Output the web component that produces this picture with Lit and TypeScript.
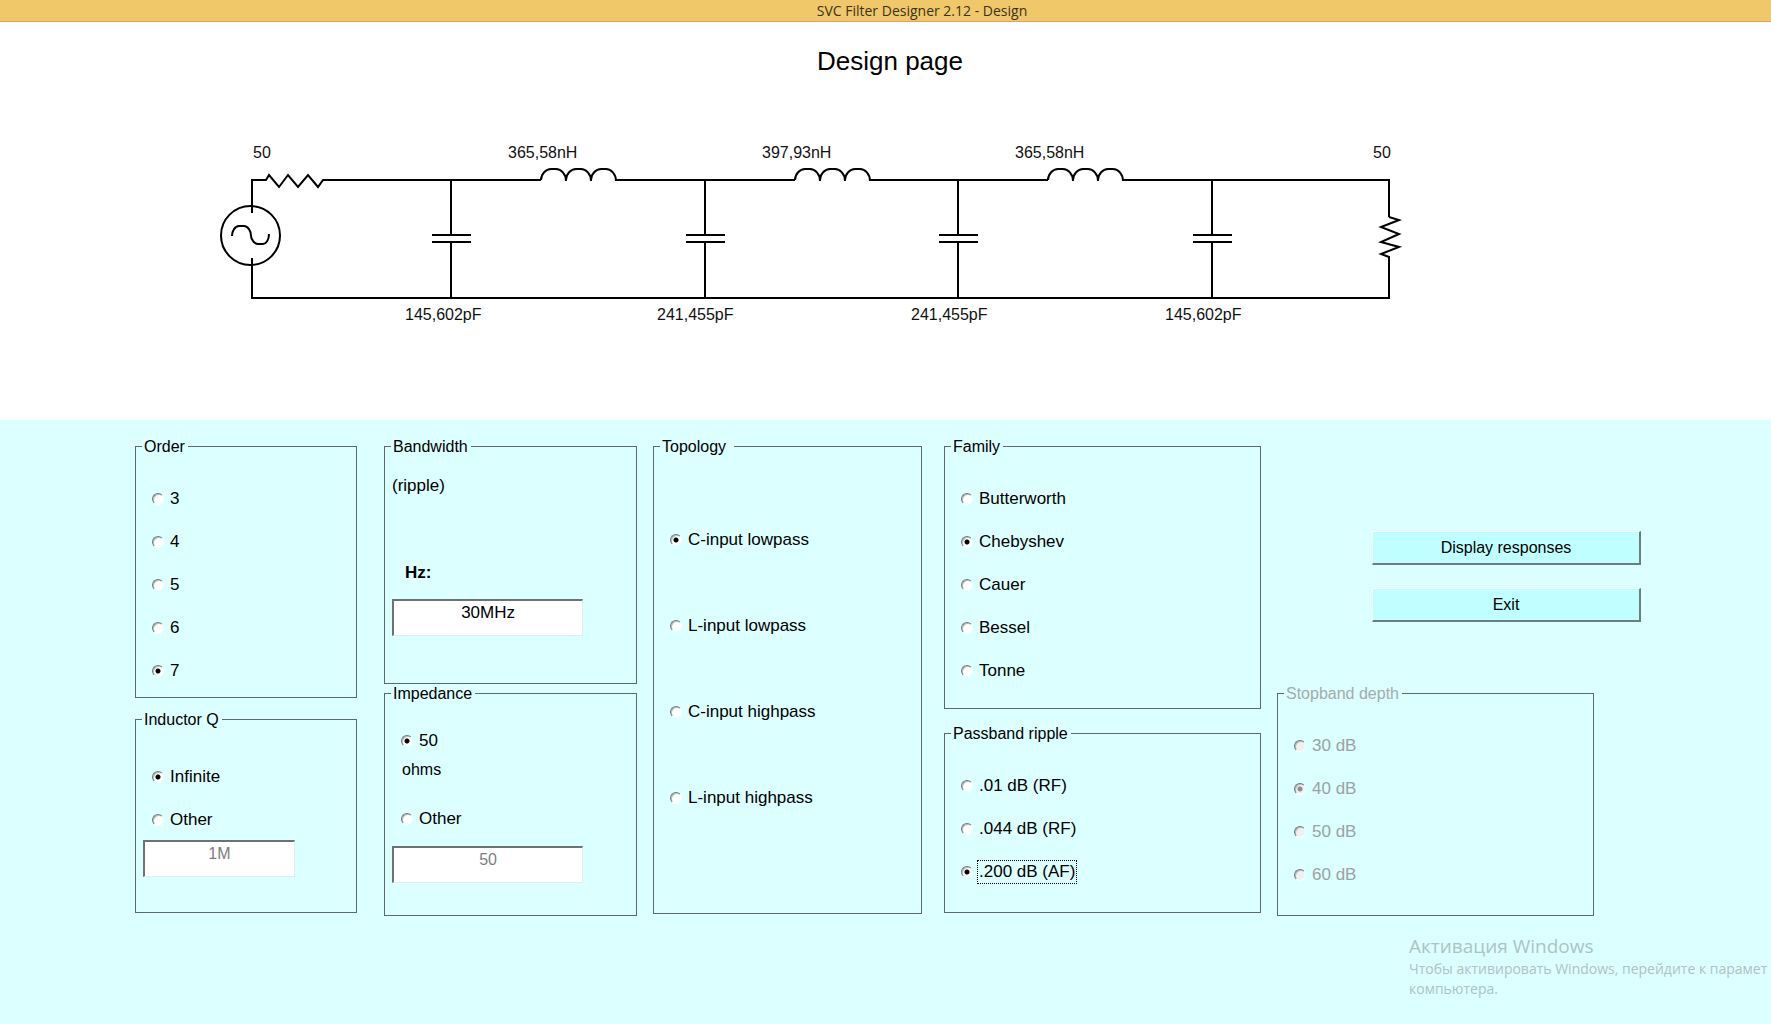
import { LitElement, html, css, svg } from "lit";
import { customElement, property, state } from "lit/decorators.js";
import { classMap } from "lit/directives/class-map.js";

const shared = css`
  * {
    box-sizing: border-box;
  }
  .row {
    display: flex;
    align-items: center;
    gap: 6px;
    padding-left: 10px;
    font-size: 17px;
    line-height: 20px;
  }
  .radio {
    appearance: none;
    flex: none;
    width: 12px;
    height: 12px;
    margin: 0;
    border: 1px solid;
    border-color: #6f7b7b #f4ffff #f4ffff #6f7b7b;
    border-radius: 50%;
    background: #ffffff;
    box-shadow: inset 1px 1px 0 #b4bcbc;
    outline: none;
  }
  .radio:checked {
    background: radial-gradient(circle, #000000 2px, #ffffff 3px);
  }
  .radio:disabled {
    background: #f0f0f0;
  }
  .radio:disabled:checked {
    background: radial-gradient(circle, #8c8c8c 2px, #f0f0f0 3px);
  }
  .radio:disabled + .caption {
    color: #9aa3a3;
  }
  .caption.focused {
    outline: 1px dotted #000000;
    outline-offset: 1px;
  }
`;

/** A column of radio buttons that share one name. */
@customElement("option-list")
class OptionList extends LitElement {
  @property() name = "";
  @property({ attribute: false }) options: string[] = [];
  @property() value = "";
  @property({ type: Boolean }) disabled = false;
  @property({ type: Boolean }) focusMark = false;

  static styles = [
    shared,
    css`
      :host {
        display: flex;
        flex-direction: column;
        gap: var(--option-gap, 23px);
      }
    `,
  ];

  render() {
    return this.options.map(
      (option) => html`
        <label class="row">
          <input
            class="radio"
            type="radio"
            name=${this.name}
            .checked=${option === this.value}
            ?disabled=${this.disabled}
            @change=${() => (this.value = option)}
          />
          <span
            class=${classMap({
              caption: true,
              focused: this.focusMark && option === this.value,
            })}
            >${option}</span
          >
        </label>
      `,
    );
  }
}

/** The ladder network: source, series coils, shunt capacitors and load. */
@customElement("filter-schematic")
class FilterSchematic extends LitElement {
  static styles = css`
    :host {
      display: block;
    }
    .drawing {
      display: block;
      width: 100%;
      height: auto;
    }
    .wire {
      fill: none;
      stroke: #000000;
      stroke-width: 2;
    }
    .value {
      font-family: "Liberation Sans", Arial, sans-serif;
      font-size: 16px;
      fill: #111111;
    }
  `;

  private capacitors = [
    { x: 451, labelX: 405, value: "145,602pF" },
    { x: 705, labelX: 657, value: "241,455pF" },
    { x: 958, labelX: 911, value: "241,455pF" },
    { x: 1212, labelX: 1165, value: "145,602pF" },
  ];

  private coils = [
    { x: 541, value: "365,58nH" },
    { x: 795, value: "397,93nH" },
    { x: 1048, value: "365,58nH" },
  ];

  render() {
    const arc = "c0 -6 5 -11 10 -11 h5 c5 0 10 5 10 12";
    return html`
      <svg class="drawing" viewBox="0 77 1771 343" role="img" aria-label="Filter schematic">
        <path class="wire" d="M252 213V180H266L269 175L279 187L288 175L298 187L308 175L318 187L323 180H541" />
        <path class="wire" d="M616 180H795M870 180H1048M1123 180H1389V217" />
        <path class="wire" d="M1389 217L1399 220L1381 227L1399 234L1381 242L1399 247L1381 254L1389 257V298H252V258" />
        <circle class="wire" cx="250.5" cy="235.5" r="29.5" />
        <path class="wire" d="M232 236C232 231 235 226 239 226H244C248 226 251 231 251 236C251 240 255 244 258 244H263C266 244 269 240 269 234" />
        ${this.coils.map(
          (c) => svg`
            <path class="wire" d="M${c.x} 180${arc}M${c.x + 25} 180${arc}M${c.x + 50} 180${arc}" />
            <text class="value" x=${c.x - 33} y="158">${c.value}</text>
          `,
        )}
        ${this.capacitors.map(
          (c) => svg`
            <path class="wire" d="M${c.x} 180V235M${c.x - 19} 235h39M${c.x - 19} 242h39M${c.x} 242V298" />
            <text class="value" x=${c.labelX} y="320">${c.value}</text>
          `,
        )}
        <text class="value" x="253" y="158">50</text>
        <text class="value" x="1373" y="158">50</text>
      </svg>
    `;
  }
}

@customElement("app-root")
class AppRoot extends LitElement {
  @state() private impedance = "50";

  static styles = [
    shared,
    css`
      :host {
        display: flex;
        flex-direction: column;
        position: relative;
        min-height: 100vh;
        overflow: hidden;
        background: #ffffff;
        color: #000000;
        font-family: "Liberation Sans", Arial, sans-serif;
        font-size: 16px;
      }
      .titlebar {
        padding-left: 73px;
        border-bottom: 1px solid #d5ac55;
        background: #f0c869;
        color: #3c321a;
        font-family: "Open Sans", "Noto Sans", sans-serif;
        font-size: 14px;
        line-height: 21px;
        text-align: center;
      }
      .heading {
        margin: 0;
        padding: 24px 0 0 9px;
        font-size: 26px;
        font-weight: 400;
        line-height: 30px;
        text-align: center;
      }
      .schematic {
        margin-top: 1px;
      }
      .panel {
        display: flex;
        align-items: flex-start;
        flex: 1;
        padding: 17px 130px 0 135px;
        background: #dcffff;
      }
      .column {
        display: flex;
        flex-direction: column;
        min-width: 0;
      }
      .order {
        flex: 222 1 0;
        gap: 12px;
        margin-right: 27px;
      }
      .band {
        flex: 253 1 0;
        margin-right: 16px;
      }
      .topology {
        flex: 269 1 0;
        margin-right: 22px;
      }
      .family {
        flex: 317 1 0;
        gap: 15px;
        margin-right: 16px;
      }
      .actions {
        flex: 364 1 0;
        padding-top: 94px;
      }
      .group {
        min-width: 0;
        margin: 0;
        padding: 33px 6px 30px;
        border: 1px solid #5f6969;
      }
      .legend {
        padding: 0 3px 0 2px;
        line-height: 19px;
        white-space: pre;
      }
      .g-order {
        padding-bottom: 16px;
      }
      .g-family {
        padding-bottom: 27px;
      }
      .g-inductor {
        padding-top: 38px;
        padding-bottom: 35px;
      }
      .g-bandwidth {
        padding-top: 20px;
        padding-bottom: 47px;
      }
      .g-impedance {
        padding-top: 28px;
        padding-bottom: 32px;
      }
      .g-topology {
        --option-gap: 66px;
        padding-top: 74px;
        padding-bottom: 105px;
      }
      .g-stopband {
        margin: 62px 47px 0 0;
        color: #a3adad;
      }
      .note {
        margin: 0 0 67px 1px;
        font-size: 17px;
        line-height: 20px;
      }
      .unit {
        display: block;
        margin: 0 0 16px 14px;
        font-size: 17px;
        font-weight: 700;
        line-height: 20px;
      }
      .ohms {
        margin: 9px 0 29px 11px;
        line-height: 20px;
      }
      .field {
        display: block;
        height: 37px;
        margin-left: 1px;
        padding: 1px 0 12px;
        border: 2px solid;
        border-color: #6b7373 #e4ecec #e4ecec #6b7373;
        border-width: 2px 1px 1px 2px;
        border-radius: 0;
        background: #ffffff;
        color: #000000;
        font: 17px/20px "Liberation Sans", Arial, sans-serif;
        text-align: center;
      }
      .field:disabled {
        color: #7d7d7d;
        font-size: 16px;
      }
      .q-field {
        width: 73%;
        margin-top: 10px;
      }
      .bw-field {
        width: 80%;
      }
      .z-field {
        margin-top: 17px;
      }
      .button {
        height: 34px;
        margin: 0 0 0 95px;
        padding: 0;
        border: 2px solid;
        border-color: #ffffff #6b7f7f #6b7f7f #ffffff;
        border-width: 1px 2px 2px 1px;
        border-radius: 0;
        background: #c0ffff;
        color: #000000;
        font: 16px/20px "Liberation Sans", Arial, sans-serif;
      }
      .button + .button {
        margin-top: 23px;
      }
      .watermark {
        position: absolute;
        right: 0;
        bottom: 25px;
        width: 362px;
        overflow: hidden;
        color: #acc4c4;
        font-family: "Open Sans", "Noto Sans", sans-serif;
        font-size: 14px;
        line-height: 20px;
        white-space: nowrap;
        pointer-events: none;
      }
      .watermark-title {
        margin: 0;
        font-size: 19px;
        line-height: 26px;
      }
      .watermark-text {
        margin: 0;
      }
    `,
  ];

  render() {
    return html`
      <header class="titlebar">SVC Filter Designer 2.12 - Design</header>
      <h1 class="heading">Design page</h1>
      <filter-schematic class="schematic"></filter-schematic>

      <main class="panel">
        <div class="column order">
          <fieldset class="group g-order">
            <legend class="legend">Order</legend>
            <option-list name="order" .options=${["3", "4", "5", "6", "7"]} value="7"></option-list>
          </fieldset>
          <fieldset class="group g-inductor">
            <legend class="legend">Inductor Q</legend>
            <option-list name="q" .options=${["Infinite", "Other"]} value="Infinite"></option-list>
            <input class="field q-field" type="text" aria-label="Inductor Q" value="1M" disabled />
          </fieldset>
        </div>

        <div class="column band">
          <fieldset class="group g-bandwidth">
            <legend class="legend">Bandwidth</legend>
            <p class="note">(ripple)</p>
            <label class="unit" for="bandwidth">Hz:</label>
            <input class="field bw-field" id="bandwidth" type="text" value="30MHz" />
          </fieldset>
          <fieldset class="group g-impedance">
            <legend class="legend">Impedance</legend>
            ${this.impedanceOption("50")}
            <p class="ohms">ohms</p>
            ${this.impedanceOption("Other")}
            <input class="field bw-field z-field" type="text" aria-label="Impedance" value="50" disabled />
          </fieldset>
        </div>

        <div class="column topology">
          <fieldset class="group g-topology">
            <legend class="legend">${"Topology "}</legend>
            <option-list
              name="topology"
              .options=${["C-input lowpass", "L-input lowpass", "C-input highpass", "L-input highpass"]}
              value="C-input lowpass"
            ></option-list>
          </fieldset>
        </div>

        <div class="column family">
          <fieldset class="group g-family">
            <legend class="legend">Family</legend>
            <option-list
              name="family"
              .options=${["Butterworth", "Chebyshev", "Cauer", "Bessel", "Tonne"]}
              value="Chebyshev"
            ></option-list>
          </fieldset>
          <fieldset class="group">
            <legend class="legend">Passband ripple</legend>
            <option-list
              name="ripple"
              .options=${[".01 dB (RF)", ".044 dB (RF)", ".200 dB (AF)"]}
              value=".200 dB (AF)"
              .focusMark=${true}
            ></option-list>
          </fieldset>
        </div>

        <div class="column actions">
          <button class="button" type="button">Display responses</button>
          <button class="button" type="button">Exit</button>
          <fieldset class="group g-stopband" disabled>
            <legend class="legend">Stopband depth</legend>
            <option-list
              name="stopband"
              .options=${["30 dB", "40 dB", "50 dB", "60 dB"]}
              value="40 dB"
              disabled
            ></option-list>
          </fieldset>
        </div>
      </main>

      <aside class="watermark">
        <p class="watermark-title">Активация Windows</p>
        <p class="watermark-text">Чтобы активировать Windows, перейдите к парамет</p>
        <p class="watermark-text">компьютера.</p>
      </aside>
    `;
  }

  private impedanceOption(option: string) {
    return html`
      <label class="row">
        <input
          class="radio"
          type="radio"
          name="impedance"
          .checked=${this.impedance === option}
          @change=${() => (this.impedance = option)}
        />
        <span class="caption">${option}</span>
      </label>
    `;
  }
}
